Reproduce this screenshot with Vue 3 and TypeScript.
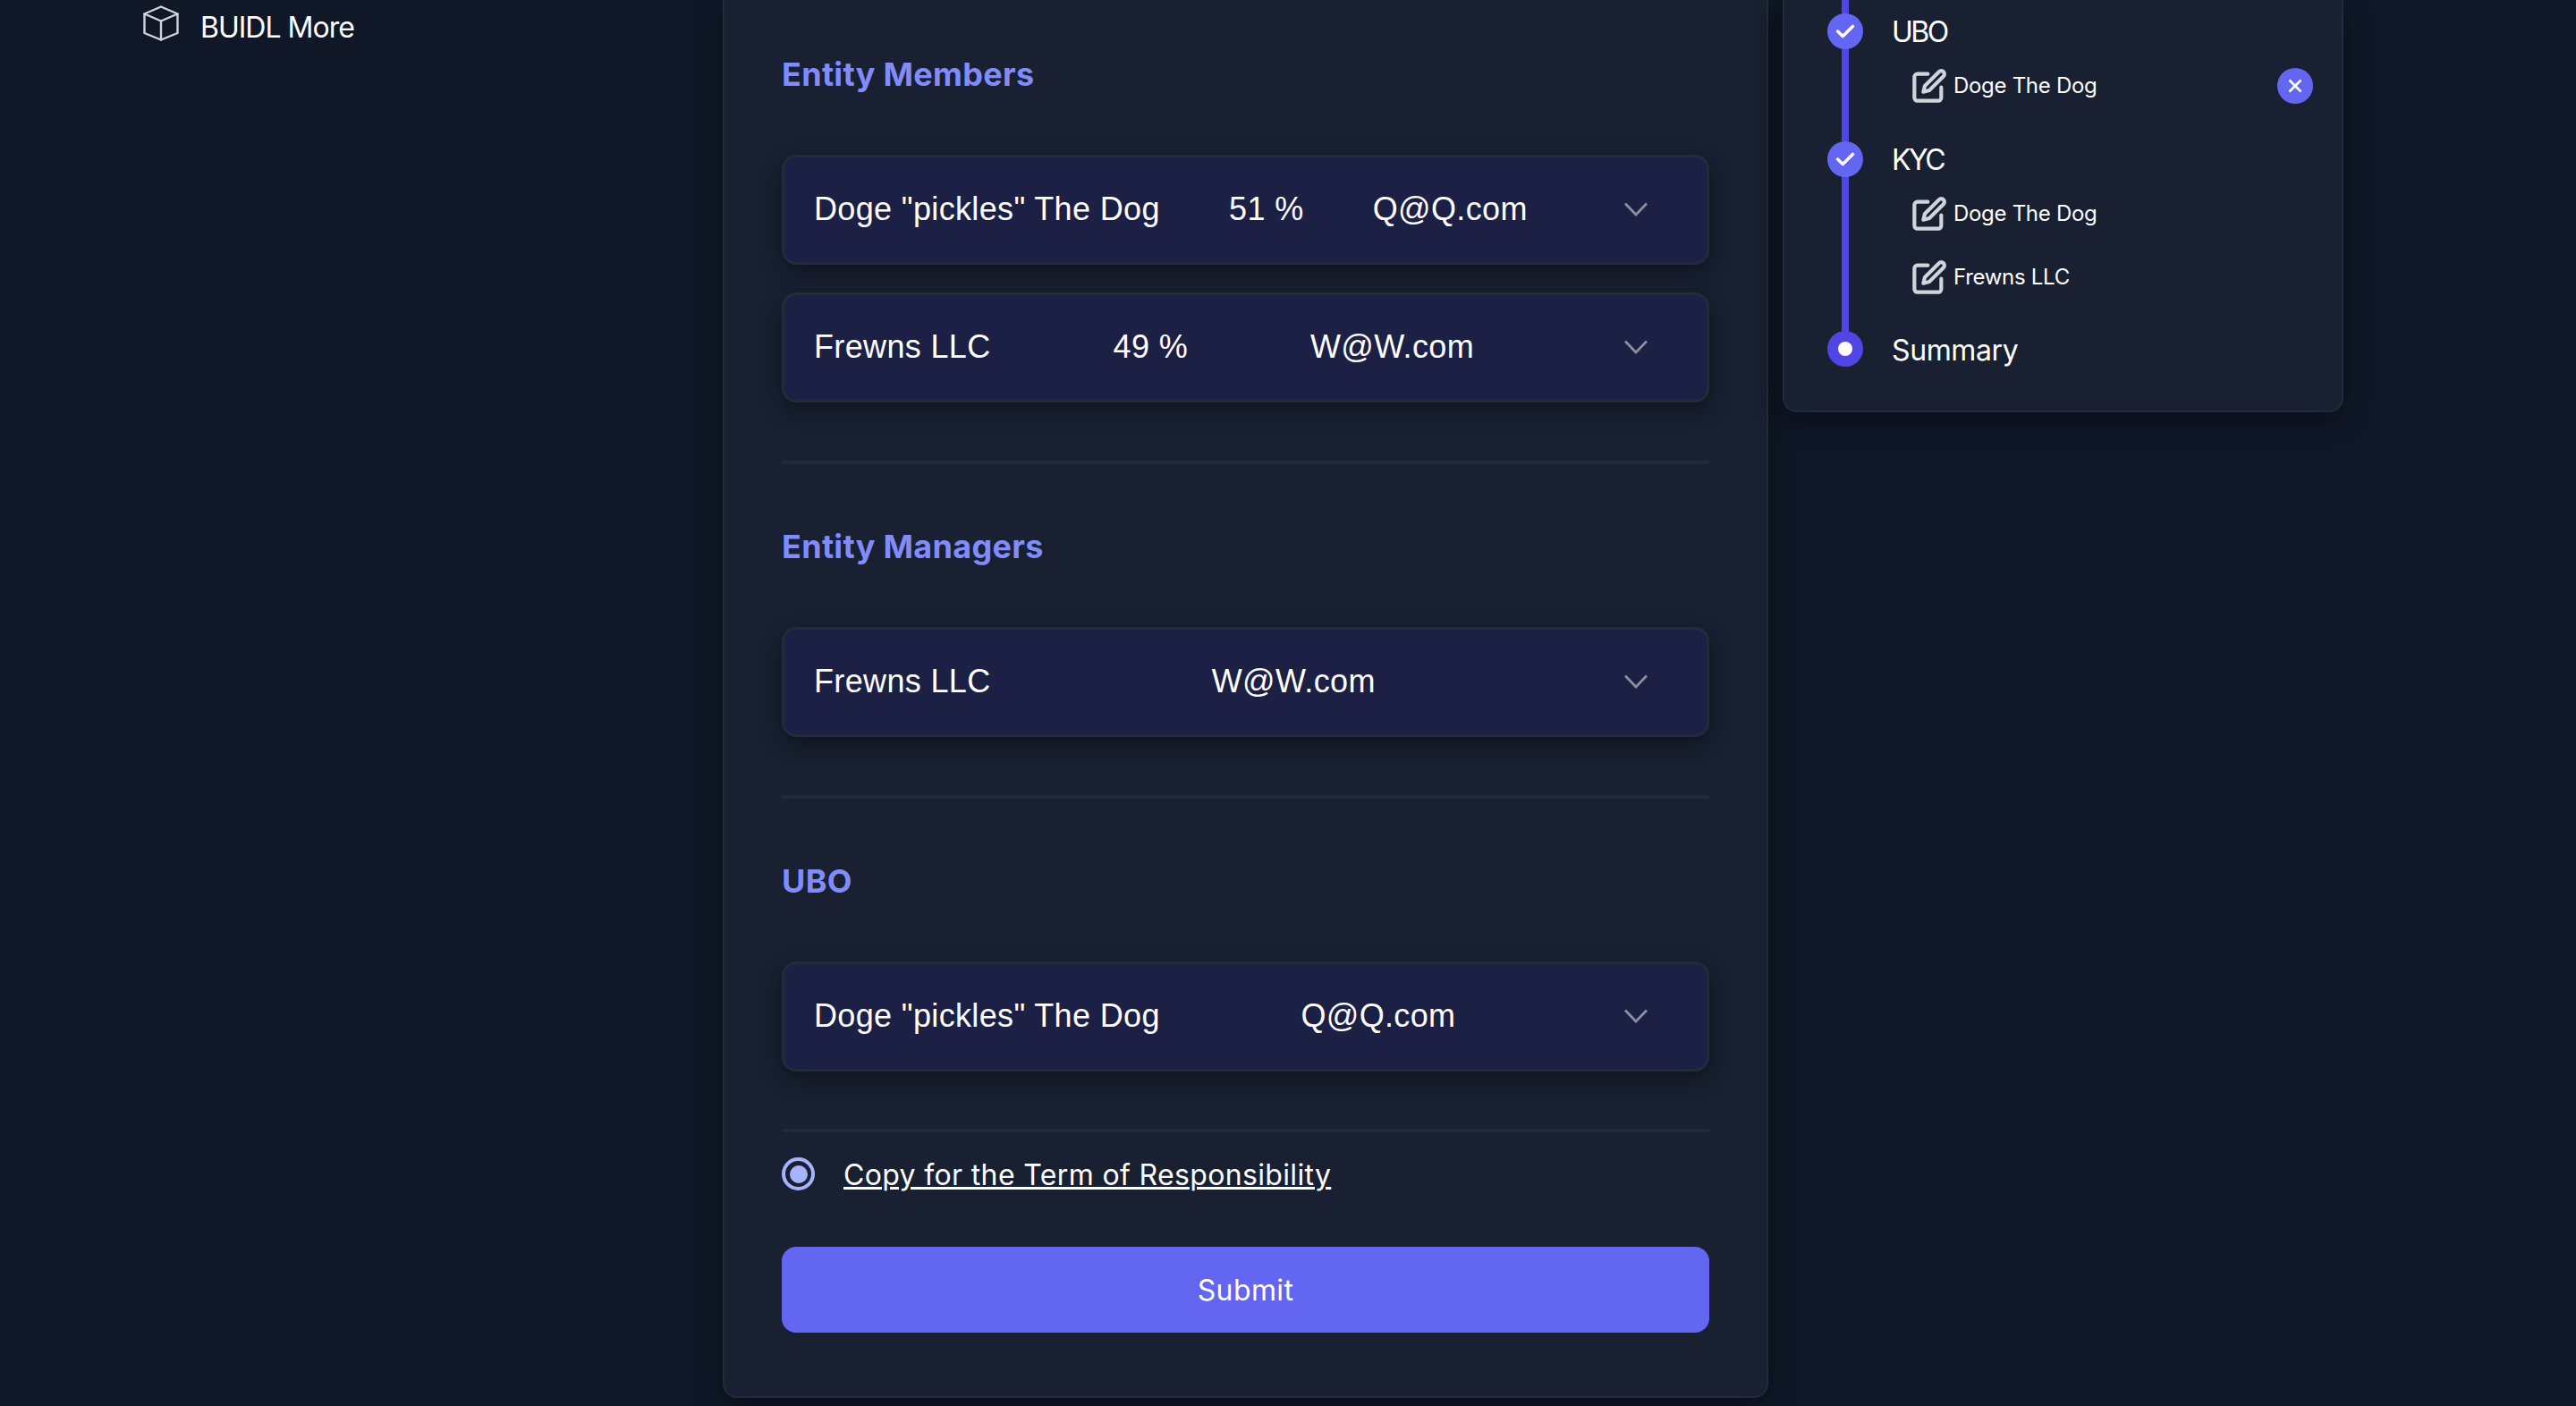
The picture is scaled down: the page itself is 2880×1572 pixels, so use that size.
<script setup lang="ts">
interface Row { name: string; pct?: string; email: string }
const sections: { title: string; rows: Row[] }[] = [
  { title: 'Entity Members', rows: [
    { name: 'Doge "pickles" The Dog', pct: '51 %', email: 'Q@Q.com' },
    { name: 'Frewns LLC', pct: '49 %', email: 'W@W.com' },
  ] },
  { title: 'Entity Managers', rows: [{ name: 'Frewns LLC', email: 'W@W.com' }] },
  { title: 'UBO', rows: [{ name: 'Doge "pickles" The Dog', email: 'Q@Q.com' }] },
]
</script>

<template>
  <div class="page">
    <aside class="side">
      <div class="side-item">
        <svg class="cube" viewBox="0 0 40 40" fill="none" stroke="currentColor" stroke-width="2.4" stroke-linejoin="round" stroke-linecap="round">
          <path d="M20 1.5 38.5 9.5V31L20 38.5 1.5 31V9.5Z" />
          <path d="M1.5 9.5 20 17.5 38.5 9.5M20 17.5V38.5" />
        </svg>
        <span class="side-label">BUIDL More</span>
      </div>
    </aside>

    <main class="card">
      <section v-for="s in sections" :key="s.title" class="section">
        <h2>{{ s.title }}</h2>
        <div class="rows">
          <div v-for="r in s.rows" :key="r.name" class="row">
            <span>{{ r.name }}</span>
            <span v-if="r.pct">{{ r.pct }}</span>
            <span>{{ r.email }}</span>
            <span class="chev">
              <svg width="28" height="16" viewBox="0 0 28 16" fill="none" stroke="currentColor" stroke-width="2.8"><path d="M2 1.5 14 14 26 1.5" /></svg>
            </span>
          </div>
        </div>
      </section>
      <label class="terms">
        <span class="radio"><span class="dot"></span></span>
        <a>Copy for the Term of Responsibility</a>
      </label>
      <button class="submit">Submit</button>
    </main>

    <aside class="steps">
      <div class="timeline">
        <div class="line"></div>
        <div class="step">
          <span class="circle"><svg width="28" height="28" viewBox="0 0 20 20" fill="#fff" stroke="#fff" stroke-width="0.7"><path d="M16.707 5.293a1 1 0 010 1.414l-8 8a1 1 0 01-1.414 0l-4-4a1 1 0 011.414-1.414L8 12.586l7.293-7.293a1 1 0 011.414 0z" /></svg></span>
          <span class="label caps">UBO</span>
        </div>
        <div class="subs">
          <div class="sub">
            <svg class="edit" viewBox="0 0 24 24" fill="none" stroke="currentColor" stroke-width="2.5" stroke-linecap="round" stroke-linejoin="round"><path d="M11 4H4a2 2 0 0 0-2 2v14a2 2 0 0 0 2 2h14a2 2 0 0 0 2-2v-7" /><path d="M18.5 2.5a2.121 2.121 0 0 1 3 3L12 15l-4 1 1-4 9.5-9.5z" /></svg>
            <span>Doge The Dog</span>
            <span class="remove"><svg width="18" height="18" viewBox="0 0 18 18" fill="none" stroke="#fff" stroke-width="2.8"><path d="M2.5 2.5 15.5 15.5M15.5 2.5 2.5 15.5" /></svg></span>
          </div>
        </div>
        <div class="step">
          <span class="circle"><svg width="28" height="28" viewBox="0 0 20 20" fill="#fff" stroke="#fff" stroke-width="0.7"><path d="M16.707 5.293a1 1 0 010 1.414l-8 8a1 1 0 01-1.414 0l-4-4a1 1 0 011.414-1.414L8 12.586l7.293-7.293a1 1 0 011.414 0z" /></svg></span>
          <span class="label caps">KYC</span>
        </div>
        <div class="subs two">
          <div class="sub">
            <svg class="edit" viewBox="0 0 24 24" fill="none" stroke="currentColor" stroke-width="2.5" stroke-linecap="round" stroke-linejoin="round"><path d="M11 4H4a2 2 0 0 0-2 2v14a2 2 0 0 0 2 2h14a2 2 0 0 0 2-2v-7" /><path d="M18.5 2.5a2.121 2.121 0 0 1 3 3L12 15l-4 1 1-4 9.5-9.5z" /></svg>
            <span>Doge The Dog</span>
          </div>
          <div class="sub">
            <svg class="edit" viewBox="0 0 24 24" fill="none" stroke="currentColor" stroke-width="2.5" stroke-linecap="round" stroke-linejoin="round"><path d="M11 4H4a2 2 0 0 0-2 2v14a2 2 0 0 0 2 2h14a2 2 0 0 0 2-2v-7" /><path d="M18.5 2.5a2.121 2.121 0 0 1 3 3L12 15l-4 1 1-4 9.5-9.5z" /></svg>
            <span>Frewns LLC</span>
          </div>
        </div>
        <div class="step">
          <span class="circle current"><span class="inner"></span></span>
          <span class="label low">Summary</span>
        </div>
      </div>
    </aside>
  </div>
</template>

<style scoped>
.page {
  width: 2880px;
  height: 1572px;
  display: flex;
  align-items: flex-start;
  overflow: hidden;
  background: #101828;
  color: #fff;
  font-family: Inter, "Noto Sans", sans-serif;
}
.side {
  width: 808px;
  flex: none;
  padding: 6px 0 0 160px;
  box-sizing: border-box;
}
.side-item {
  display: flex;
  align-items: flex-start;
  gap: 24px;
  font-size: 32px;
  line-height: 42px;
  letter-spacing: -1px;
}
.side-label {
  padding-top: 4px;
}
.cube {
  width: 40px;
  height: 40px;
  color: #d1d5db;
}
.card {
  width: 1169px;
  height: 1563px;
  flex: none;
  box-sizing: border-box;
  padding: 55px 64px 0;
  background: #182031;
  border: 2px solid #232b3a;
  border-top: none;
  border-radius: 0 0 16px 16px;
  box-shadow: 0 8px 32px rgba(0, 0, 0, 0.45);
}
.section + .section {
  margin-top: 65px;
  padding-top: 64px;
  border-top: 4px solid #222a3a;
}
h2 {
  margin: 0 0 62px;
  font-size: 36px;
  line-height: 56px;
  font-weight: 700;
  color: #818cf8;
  letter-spacing: 0.3px;
}
.rows {
  display: flex;
  flex-direction: column;
  gap: 31px;
}
.row {
  height: 123px;
  box-sizing: border-box;
  padding: 0 35px 2px 33px;
  display: flex;
  align-items: center;
  justify-content: space-between;
  background: #1c2045;
  border: 3px solid #232b3a;
  border-radius: 16px;
  box-shadow: 0 8px 24px rgba(0, 0, 0, 0.4);
  font-family: "Liberation Sans", Arial, sans-serif;
  font-size: 36px;
  letter-spacing: 0.35px;
}
.chev {
  width: 88px;
  display: flex;
  justify-content: center;
  color: #8b8f9e;
}
.section:last-of-type {
  padding-bottom: 64px;
  border-bottom: 4px solid #222a3a;
}
.terms {
  margin-top: 26px;
  display: flex;
  align-items: center;
  gap: 32px;
  font-size: 32px;
  line-height: 44px;
}
.radio {
  width: 37px;
  height: 37px;
  margin-bottom: 3px;
  box-sizing: border-box;
  border: 4px solid #a5b4fc;
  border-radius: 50%;
  display: flex;
  align-items: center;
  justify-content: center;
}
.dot {
  width: 20px;
  height: 20px;
  border-radius: 50%;
  background: #a5b4fc;
}
.terms a {
  text-decoration: underline;
  text-decoration-thickness: 3px;
  letter-spacing: 0.35px;
}
.submit {
  display: block;
  width: 100%;
  height: 96px;
  margin-top: 58px;
  border: none;
  border-radius: 16px;
  background: #6366f1;
  color: #fff;
  font: 400 32px Inter, sans-serif;
  letter-spacing: 0.4px;
}
.steps {
  width: 627px;
  height: 461px;
  flex: none;
  margin-left: 16px;
  box-sizing: border-box;
  padding: 15px 0 0 48px;
  background: #182031;
  border: 2px solid #232b3a;
  border-top: none;
  border-radius: 0 0 16px 16px;
  box-shadow: 0 8px 32px rgba(0, 0, 0, 0.45);
}
.timeline {
  position: relative;
}
.line {
  position: absolute;
  left: 16px;
  top: -15px;
  width: 8px;
  height: 386px;
  background: #4f46e5;
}
.step {
  position: relative;
  display: flex;
  align-items: center;
  gap: 32px;
  height: 40px;
}
.circle {
  width: 40px;
  height: 40px;
  border-radius: 50%;
  background: #6366f1;
  display: flex;
  align-items: center;
  justify-content: center;
}
.circle.current {
  background: #4f46e5;
}
.inner {
  width: 16px;
  height: 16px;
  border-radius: 50%;
  background: #fff;
}
.label {
  font-size: 32px;
  letter-spacing: -0.4px;
}
.label.caps {
  letter-spacing: -2.5px;
}
.label.low {
  padding-top: 3px;
}
.subs {
  display: flex;
  flex-direction: column;
  gap: 32px;
  padding: 21px 0 43px 94px;
}
.subs.two {
  padding-bottom: 41px;
}
.sub {
  display: flex;
  align-items: center;
  gap: 7px;
  height: 39px;
  font-size: 24px;
  letter-spacing: -0.3px;
}
.edit {
  width: 40px;
  height: 40px;
  color: #d1d5db;
}
.remove {
  width: 40px;
  height: 40px;
  margin-left: auto;
  margin-right: 32px;
  border-radius: 50%;
  background: #6366f1;
  display: flex;
  align-items: center;
  justify-content: center;
}
</style>
